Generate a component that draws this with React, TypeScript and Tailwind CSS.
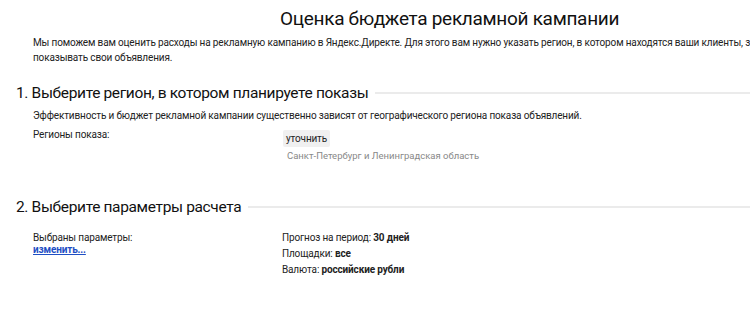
const body = { fontFamily: 'Roboto, "Noto Sans", sans-serif' };

function SectionTitle({ children }: { children: React.ReactNode }) {
  return (
    <div className="flex items-center gap-[7px] pl-4">
      <h2 className="text-[15.5px] leading-5 tracking-[-0.35px] text-[#111] whitespace-nowrap">{children}</h2>
      <div className="h-[2px] flex-1 bg-[#ebebeb]" />
    </div>
  );
}

export default function App() {
  return (
    <div className="w-[750px] h-[317px] overflow-hidden bg-white text-[#222] text-[10px] tracking-[-0.15px]" style={body}>
      <h1 className="pt-[7px] pl-[280px] text-[19px] leading-6 tracking-[-0.3px] text-[#111] whitespace-nowrap">
        Оценка бюджета рекламной кампании
      </h1>

      <div className="mt-[4px] pl-[33px] leading-[15px]">
        <p className="whitespace-nowrap">
          Мы поможем вам оценить расходы на рекламную кампанию в Яндекс.Директе. Для этого вам нужно указать регион, в котором находятся ваши клиенты, заинтересованные в рекламе, и где вы хотите
        </p>
        <p>показывать свои объявления.</p>
      </div>

      <div className="mt-[18px]">
        <SectionTitle>1. Выберите регион, в котором планируете показы</SectionTitle>
      </div>

      <div className="pl-[33px] leading-[15px]">
        <p className="mt-[5px]">
          Эффективность и бюджет рекламной кампании существенно зависят от географического региона показа объявлений.
        </p>
        <div className="mt-[7px] flex">
          <div className="w-[250px] leading-[10px]">Регионы показа:</div>
          <div className="flex flex-col items-start">
            <button className="rounded-[2px] bg-[#f0f0f0] px-[3px] py-[1px] text-[10px] leading-[15px] tracking-[-0.15px] text-[#222]">
              уточнить
            </button>
            <span className="mt-[2px] ml-[4px] text-[9.5px] leading-[14px] tracking-normal text-[#888]">
              Санкт-Петербург и Ленинградская область
            </span>
          </div>
        </div>
      </div>

      <div className="mt-[34px]">
        <SectionTitle>2. Выберите параметры расчета</SectionTitle>
      </div>

      <div className="mt-[13px] flex pl-[33px] leading-[16px]">
        <div className="w-[249px] pt-[2px]">
          <p className="leading-[12px]">Выбраны параметры:</p>
          <a href="#" className="block font-bold text-[#1f4fc4] underline leading-[12px]">
            изменить...
          </a>
        </div>
        <div>
          <p>
            Прогноз на период: <b>30 дней</b>
          </p>
          <p>
            Площадки: <b>все</b>
          </p>
          <p>
            Валюта: <b>российские рубли</b>
          </p>
        </div>
      </div>
    </div>
  );
}
